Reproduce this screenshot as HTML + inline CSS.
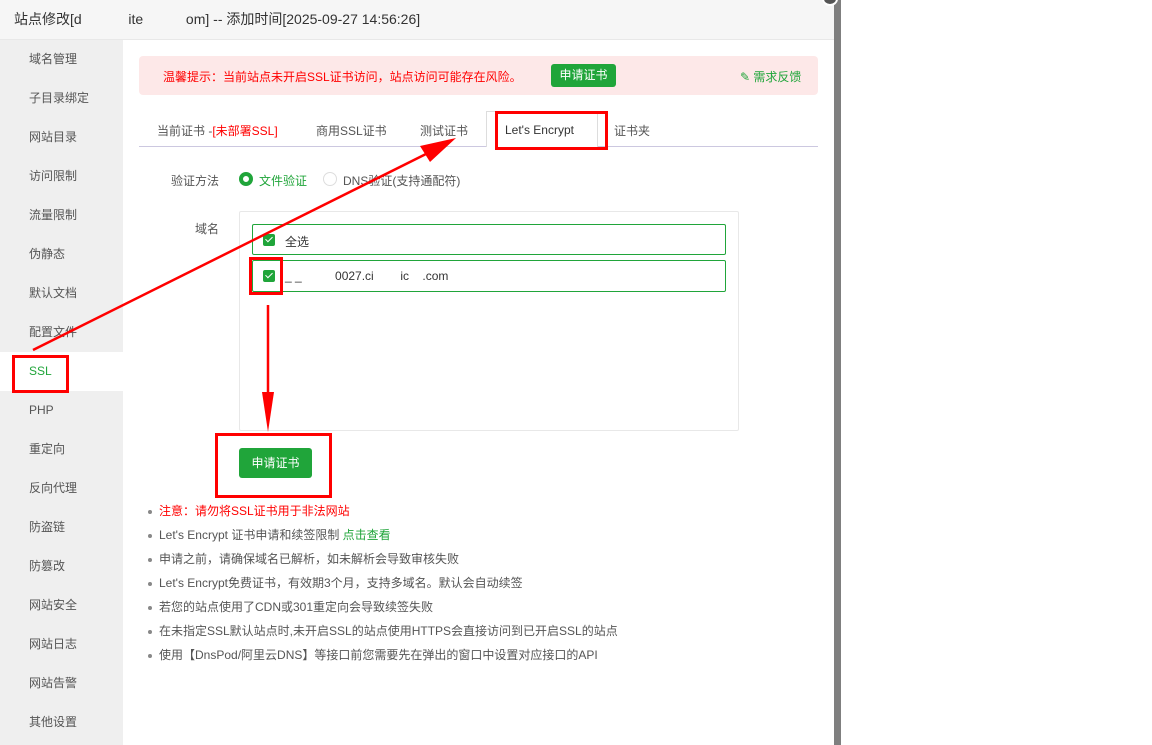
<!DOCTYPE html>
<html><head><meta charset="utf-8"><style>
*{margin:0;padding:0;box-sizing:border-box}
body{width:1152px;height:745px;background:#fff;font-family:"Liberation Sans","Noto Sans CJK SC",sans-serif;font-size:12px;color:#555;position:relative;overflow:hidden}
.abs{position:absolute}
.hdr{left:0;top:0;width:834px;height:40px;background:#f6f6f6;border-bottom:1px solid #e8e8e8;font-size:14px;color:#333;line-height:38px;padding-left:14px}
.side{left:0;top:40px;width:123px;height:705px;background:#efefef}
.side div{height:39px;line-height:39px;padding-left:29px;color:#555;font-size:12px}
.side .on{background:#fff;color:#20a53a}
.strip{left:834px;top:0;width:7px;height:745px;background:#7f7f7f}
.gbtn{background:#20a53a;color:#fff;border-radius:3px;text-align:center;font-size:12px}
.box{border:3px solid #f00}
.cb{width:12px;height:12px;background:#20a53a;border-radius:2px}
.cb:after{content:"";position:absolute;left:4px;top:1px;width:3px;height:6px;border:solid #fff;border-width:0 1px 1px 0;transform:rotate(45deg)}
ul{list-style:none}
li{height:24px;line-height:24px;position:relative;padding-left:12px}
li:before{content:"";position:absolute;left:1px;top:11px;width:4px;height:4px;border-radius:50%;background:#888}
</style></head><body>
<div class="abs hdr">站点修改[d&nbsp;&nbsp;&nbsp;&nbsp;&nbsp;&nbsp;&nbsp;&nbsp;&nbsp;&nbsp;&nbsp;&nbsp;ite&nbsp;&nbsp;&nbsp;&nbsp;&nbsp;&nbsp;&nbsp;&nbsp;&nbsp;&nbsp;&nbsp;om] -- 添加时间[2025-09-27 14:56:26]</div>
<div class="abs strip"></div>
<div class="abs" style="left:822px;top:-8px;width:16px;height:14px;border-radius:50%;background:#555;border:2px solid #fff"></div>
<div class="abs side">
<div>域名管理</div><div>子目录绑定</div><div>网站目录</div><div>访问限制</div><div>流量限制</div><div>伪静态</div><div>默认文档</div><div>配置文件</div><div class="on">SSL</div><div>PHP</div><div>重定向</div><div>反向代理</div><div>防盗链</div><div>防篡改</div><div>网站安全</div><div>网站日志</div><div>网站告警</div><div>其他设置</div>
</div>
<div class="abs" style="left:139px;top:56px;width:679px;height:39px;background:#fde8e8;border-radius:4px"></div>
<div class="abs" style="left:163px;top:68px;color:#f00;font-size:12px">温馨提示：当前站点未开启SSL证书访问，站点访问可能存在风险。</div>
<div class="abs gbtn" style="left:551px;top:64px;width:65px;height:23px;line-height:23px">申请证书</div>
<div class="abs" style="left:740px;top:68px;color:#20a53a">&#9998; 需求反馈</div>
<div class="abs" style="left:139px;top:146px;width:679px;height:1px;background:#ccc8e0"></div>
<div class="abs" style="left:486px;top:111px;width:112px;height:36px;background:#fff;border:1px solid #ddd;border-bottom:none"></div>
<div class="abs" style="left:157px;top:122px;color:#555">当前证书 -<span style="color:#f00">[未部署SSL]</span></div>
<div class="abs" style="left:316px;top:122px">商用SSL证书</div>
<div class="abs" style="left:420px;top:122px">测试证书</div>
<div class="abs" style="left:505px;top:123px;color:#333">Let's Encrypt</div>
<div class="abs" style="left:614px;top:122px">证书夹</div>
<div class="abs box" style="left:495px;top:111px;width:113px;height:39px"></div>
<div class="abs" style="left:171px;top:172px">验证方法</div>
<div class="abs" style="left:239px;top:172px;width:14px;height:14px;border-radius:50%;border:4px solid #20a53a"></div>
<div class="abs" style="left:259px;top:172px;color:#20a53a">文件验证</div>
<div class="abs" style="left:323px;top:172px;width:14px;height:14px;border-radius:50%;border:1px solid #ddd"></div>
<div class="abs" style="left:343px;top:172px">DNS验证(支持通配符)</div>
<div class="abs" style="left:195px;top:220px">域名</div>
<div class="abs" style="left:239px;top:211px;width:500px;height:220px;border:1px solid #e8e8e8;border-radius:2px"></div>
<div class="abs" style="left:252px;top:224px;width:474px;height:31px;border:1px solid #20a53a;border-radius:2px"></div>
<div class="abs cb" style="left:263px;top:234px"></div>
<div class="abs" style="left:285px;top:233px;color:#333">全选</div>
<div class="abs" style="left:252px;top:260px;width:474px;height:32px;border:1px solid #20a53a;border-radius:2px"></div>
<div class="abs cb" style="left:263px;top:270px"></div>
<div class="abs" style="left:285px;top:269px;color:#333">_ _&nbsp;&nbsp;&nbsp;&nbsp;&nbsp;&nbsp;&nbsp;&nbsp;&nbsp;&nbsp;0027.ci&nbsp;&nbsp;&nbsp;&nbsp;&nbsp;&nbsp;&nbsp;&nbsp;ic&nbsp;&nbsp;&nbsp;&nbsp;.com</div>
<div class="abs box" style="left:249px;top:257px;width:34px;height:38px"></div>
<div class="abs gbtn" style="left:239px;top:448px;width:73px;height:30px;line-height:30px">申请证书</div>
<div class="abs box" style="left:215px;top:433px;width:117px;height:65px"></div>
<ul class="abs" style="left:147px;top:499px">
<li style="color:#f00">注意：请勿将SSL证书用于非法网站</li>
<li>Let's Encrypt 证书申请和续签限制 <span style="color:#20a53a">点击查看</span></li>
<li>申请之前，请确保域名已解析，如未解析会导致审核失败</li>
<li>Let's Encrypt免费证书，有效期3个月，支持多域名。默认会自动续签</li>
<li>若您的站点使用了CDN或301重定向会导致续签失败</li>
<li>在未指定SSL默认站点时,未开启SSL的站点使用HTTPS会直接访问到已开启SSL的站点</li>
<li>使用【DnsPod/阿里云DNS】等接口前您需要先在弹出的窗口中设置对应接口的API</li>
</ul>
<div class="abs box" style="left:12px;top:355px;width:57px;height:38px"></div>
<svg class="abs" style="left:0;top:0" width="834" height="745">
<line x1="33" y1="350" x2="430" y2="152" stroke="#f00" stroke-width="2.5"/>
<polygon points="456,138 420,146 430,162" fill="#f00"/>
<line x1="268" y1="305" x2="268" y2="400" stroke="#f00" stroke-width="2.5"/>
<polygon points="262,392 274,392 268,432" fill="#f00"/>
</svg>
</body></html>
